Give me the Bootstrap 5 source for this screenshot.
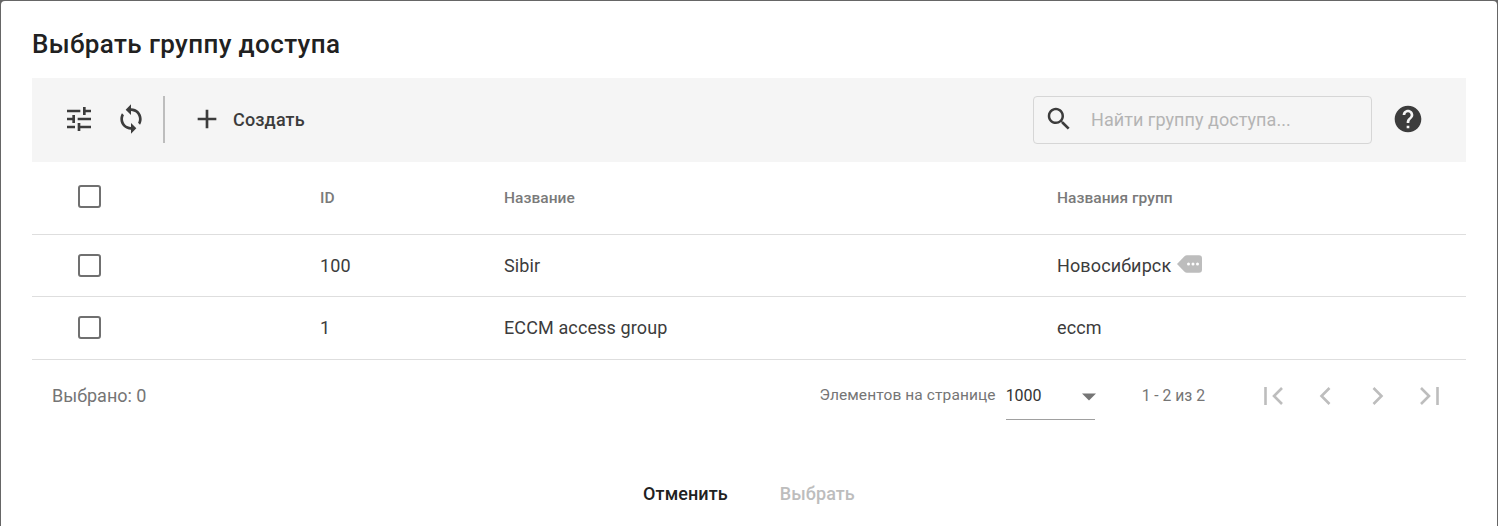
<!DOCTYPE html>
<html lang="ru">
<head>
  <meta charset="UTF-8" />
  <meta name="viewport" content="width=device-width, initial-scale=1" />
  <title>Выбрать группу доступа</title>
  <link href="https://cdn.jsdelivr.net/npm/bootstrap@5.3.0/dist/css/bootstrap.min.css" rel="stylesheet" />
  <style>
    html, body { height: 100%; overflow: hidden; }
    body { background: #666; font-family: Roboto, "Liberation Sans", sans-serif; color: #3c3c3c; padding: 1px 1px 0; }
    .dlg-box { background: #fff; border-radius: 4px 4px 0 0; height: 525px; padding: 0 31px; }
    .dlg-title { font-size: 26px; font-weight: 500; line-height: 32px; color: #212121; margin: 0; padding: 27px 0 18px; letter-spacing: .38px; }
    .tool-bar { background: #f5f5f5; height: 84px; padding: 0 42px 2px 30.5px; }
    .tool-btn { width: 32px; height: 32px; color: #3c3c3c; flex: none; }
    .tool-sync { margin-left: 20.5px; }
    .tool-sep { width: 2px; height: 47px; background: #bdbdbd; margin: 0 26px 0 16px; }
    .create-label { font-size: 18px; font-weight: 500; letter-spacing: .15px; color: #3c3c3c; margin-left: 10px; padding-top: 1px; line-height: 24px; }
    .search-box { width: 339px; height: 48px; border: 1px solid #d6d6d6; border-radius: 4px; padding: 0 10px; margin: 2px 20px 0 0; }
    .search-box svg { margin-top: -2px; }
    .search-box input { border: 0; outline: 0; background: transparent; font-size: 18px; letter-spacing: .05px; padding: 0 0 1px; margin-left: 17px; flex: 1; min-width: 0; font-family: inherit; }
    .search-box input::placeholder { color: #b4b4b4; opacity: 1; }
    .grid-table { table-layout: fixed; width: 100%; margin: 0; --bs-table-color: #3c3c3c; }
    .grid-table th, .grid-table td { padding: 0; vertical-align: middle; border-bottom: 1px solid #dedede; font-size: 18px; letter-spacing: .12px; color: #3c3c3c; box-shadow: none; }
    .grid-table th { font-size: 15.5px; font-weight: 500; letter-spacing: .05px; color: #7a7a7a; height: 72px; padding-top: 1px; }
    .grid-table td { height: 62.5px; }
    .grid-table .cell-check { width: 288px; padding-left: 46px; }
    .grid-table th.cell-check { padding-top: 0; padding-bottom: 2px; }
    .grid-table .cell-id { width: 184px; }
    .grid-table .cell-name { width: 553px; }
    .box-check { display: block; width: 23px; height: 23px; border: 2px solid #707070; border-radius: 3px; background: #fff; appearance: none; margin: 0; }
    .more-tag { margin-left: 6px; vertical-align: -1px; }
    .foot-row { height: 72px; padding: 0 25px 0 20px; color: #757575; font-size: 18px; }
    .per-page { font-size: 15.5px; letter-spacing: .1px; margin-right: 10px; padding-top: 1px; }
    .page-select { width: 89px; height: 48px; border-bottom: 1px solid #a0a0a0; color: #333; font-size: 16px; padding-top: 2px; margin-right: 47px; }
    .page-select svg { margin-right: -6px; }
    .page-range { font-size: 15.7px; margin-right: 56px; }
    .page-icons { gap: 28px; color: #bdbdbd; margin-top: 1px; }
    .dlg-actions { padding-top: 50px; gap: 52px; }
    .act-btn { font-size: 18px; font-weight: 500; letter-spacing: .1px; background: none; border: 0; padding: 0; line-height: 24px; font-family: inherit; }
    .act-main { color: #212121; }
    .act-off { color: #bdbdbd; }
  </style>
</head>
<body>
  <div class="dlg-box">
    <h5 class="dlg-title">Выбрать группу доступа</h5>

    <div class="tool-bar d-flex align-items-center">
      <!-- фильтр -->
      <svg class="tool-btn" viewBox="0 0 24 24" fill="currentColor"><path d="M3 17v2h6v-2H3zM3 5v2h10V5H3zm10 16v-2h8v-2h-8v-2h-2v6h2zM7 9v2H3v2h4v2h2V9H7zm14 4v-2H11v2h10zm-6-4h2V7h4V5h-4V3h-2v6z"/></svg>
      <!-- обновить -->
      <svg class="tool-btn tool-sync" viewBox="0 0 24 24" fill="currentColor"><path d="M12 4V1L8 5l4 4V6c3.310 0 6 2.690 6 6 0 1.010-.25 1.970-.7 2.800l1.460 1.460C19.540 15.030 20 13.570 20 12c0-4.420-3.580-8-8-8zm0 14c-3.310 0-6-2.690-6-6 0-1.010.25-1.970.7-2.800L5.240 7.740C4.460 8.970 4 10.430 4 12c0 4.420 3.580 8 8 8v3l4-4-4-4v3z"/></svg>
      <div class="tool-sep"></div>
      <svg class="tool-btn" viewBox="0 0 24 24" fill="currentColor"><path d="M19 13h-6v6h-2v-6H5v-2h6V5h2v6h6v2z"/></svg>
      <span class="create-label">Создать</span>

      <div class="search-box d-flex align-items-center ms-auto">
        <svg width="30" height="30" viewBox="0 0 24 24" fill="#3c3c3c"><path d="M15.500 14h-.79l-.28-.27C15.410 12.590 16 11.110 16 9.500 16 5.910 13.090 3 9.500 3S3 5.910 3 9.500 5.910 16 9.500 16c1.610 0 3.090-.59 4.230-1.570l.27.28v.79l5 4.990L20.490 19l-4.990-5zm-6 0C7.010 14 5 11.990 5 9.500S7.010 5 9.500 5 14 7.010 14 9.500 11.990 14 9.500 14z"/></svg>
        <input type="text" placeholder="Найти группу доступа..." />
      </div>
      <svg width="32" height="32" viewBox="0 0 24 24" fill="#3c3c3c"><path d="M12 2C6.480 2 2 6.480 2 12s4.480 10 10 10 10-4.480 10-10S17.520 2 12 2zm1 17h-2v-2h2v2zm2.070-7.750l-.9.920C13.450 12.900 13 13.500 13 15h-2v-.5c0-1.100.45-2.100 1.170-2.830l1.240-1.260c.37-.36.59-.86.59-1.410 0-1.100-.9-2-2-2s-2 .9-2 2H8c0-2.210 1.790-4 4-4s4 1.790 4 4c0 .88-.36 1.680-.93 2.250z"/></svg>
    </div>

    <table class="table grid-table">
      <thead>
        <tr>
          <th class="cell-check"><input class="box-check" type="checkbox" /></th>
          <th class="cell-id">ID</th>
          <th class="cell-name">Название</th>
          <th>Названия групп</th>
        </tr>
      </thead>
      <tbody>
        <tr>
          <td class="cell-check"><input class="box-check" type="checkbox" /></td>
          <td>100</td>
          <td>Sibir</td>
          <td>Новосибирск<svg class="more-tag" width="25" height="18" viewBox="0 0 25 18"><path d="M0 9 7.500 1.200Q8.500 .2 10 .2H22Q25 .2 25 3.200V14.800Q25 17.800 22 17.800H10Q8.500 17.800 7.500 16.800Z" fill="#bdbdbd"/><circle cx="11.500" cy="9" r="1.500" fill="#fff"/><circle cx="16" cy="9" r="1.500" fill="#fff"/><circle cx="20.500" cy="9" r="1.500" fill="#fff"/></svg></td>
        </tr>
        <tr>
          <td class="cell-check"><input class="box-check" type="checkbox" /></td>
          <td>1</td>
          <td>ECCM access group</td>
          <td>eccm</td>
        </tr>
      </tbody>
    </table>

    <div class="foot-row d-flex align-items-center">
      <span>Выбрано: 0</span>
      <span class="per-page ms-auto">Элементов на странице</span>
      <div class="page-select d-flex align-items-center justify-content-between">
        <span>1000</span>
        <svg width="24" height="24" viewBox="0 0 24 24" fill="#757575"><path d="M5 9.500h14l-7 7z"/></svg>
      </div>
      <span class="page-range">1 - 2 из 2</span>
      <div class="page-icons d-flex align-items-center">
        <svg width="24" height="24" viewBox="0 0 24 24" fill="none" stroke="currentColor" stroke-width="2.600"><path d="M4.500 3v18M21 4l-8 8 8 8"/></svg>
        <svg width="24" height="24" viewBox="0 0 24 24" fill="none" stroke="currentColor" stroke-width="2.600"><path d="M16.500 4l-8 8 8 8"/></svg>
        <svg width="24" height="24" viewBox="0 0 24 24" fill="none" stroke="currentColor" stroke-width="2.600"><path d="M8.500 4l8 8-8 8"/></svg>
        <svg width="24" height="24" viewBox="0 0 24 24" fill="none" stroke="currentColor" stroke-width="2.600"><path d="M20.500 3v18M4 4l8 8-8 8"/></svg>
      </div>
    </div>

    <div class="dlg-actions d-flex justify-content-center">
      <button type="button" class="act-btn act-main">Отменить</button>
      <button type="button" class="act-btn act-off">Выбрать</button>
    </div>
  </div>

  <script src="https://cdn.jsdelivr.net/npm/bootstrap@5.3.0/dist/js/bootstrap.bundle.min.js"></script>
</body>
</html>
